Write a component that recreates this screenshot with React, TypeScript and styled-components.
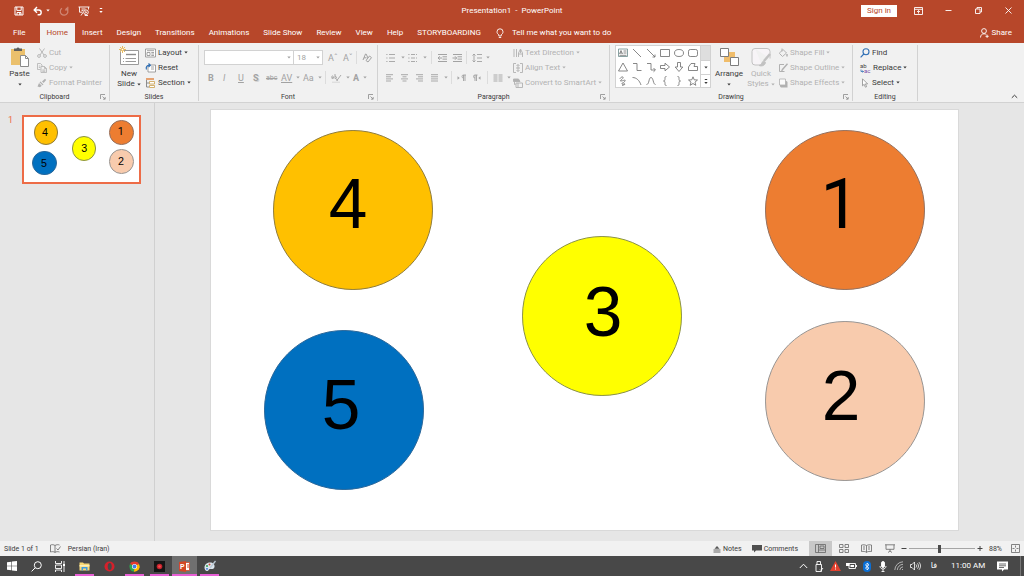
import React from "react";
import styled, { createGlobalStyle, css } from "styled-components";

const red = "#b7472a";
const ink = "#3b3b3b";
const faded = "#b1b1b1";
const line = "#d2d2d2";
const ui = '"Roboto", "Liberation Sans", sans-serif';

const GlobalStyle = createGlobalStyle`
  * { box-sizing: border-box; }
  body { margin: 0; background: #e6e6e6; font-family: ${ui}; }
  button, select, input { font: inherit; color: inherit; }
  svg { display: block; flex: none; overflow: visible; }
`;

const Page = styled.div`
  min-height: 100vh;
  display: flex;
  flex-direction: column;
  font-size: 8px;
  line-height: 10px;
  color: ${ink};
  white-space: nowrap;
`;

const bare = css`
  border: 0;
  padding: 0;
  margin: 0;
  background: none;
  display: flex;
  align-items: center;
  cursor: default;
`;

/* ---------- title bar and tabs ---------- */

const TitleBar = styled.header`
  height: 23px;
  display: grid;
  grid-template-columns: 1fr auto 1fr;
  align-items: center;
  padding-bottom: 2px;
  background: ${red};
  color: #fff;
`;
const QuickAccess = styled.div`
  display: flex;
  align-items: center;
  gap: 9px;
  padding-left: 14px;
`;
const BarButton = styled.button<{ $dim?: boolean }>`
  ${bare}
  gap: 3px;
  opacity: ${(p) => (p.$dim ? 0.35 : 1)};
`;
const DocTitle = styled.h1`
  margin: 0;
  font-size: 8px;
  font-weight: 400;
`;
const WindowTools = styled.div`
  display: flex;
  align-items: center;
  justify-content: flex-end;
  padding-right: 1px;
`;
const SignIn = styled.button`
  ${bare}
  height: 12px;
  padding: 0 6px;
  margin-right: 6px;
  background: #fff;
  color: ${red};
`;
const WindowButton = styled.button`
  ${bare}
  width: 30px;
  height: 20px;
  justify-content: center;
`;

const TabBar = styled.nav`
  height: 20px;
  display: flex;
  align-items: stretch;
  background: ${red};
  color: #fff;
`;
const Tab = styled.button<{ $active?: boolean; $file?: boolean }>`
  ${bare}
  padding: 0 ${(p) => (p.$file ? "14px 0 13px" : "7px")};
  background: ${(p) => (p.$active ? "#f1f1f1" : "none")};
  color: ${(p) => (p.$active ? red : "#fff")};
`;
const TellMe = styled.label`
  display: flex;
  align-items: center;
  gap: 8px;
  margin-left: 8px;
`;
const TellMeInput = styled.input`
  width: 120px;
  padding: 0;
  border: 0;
  outline: 0;
  background: none;
  &::placeholder { color: #fff; opacity: 1; }
`;
const Share = styled.button`
  ${bare}
  gap: 3px;
  margin-left: auto;
  padding-right: 12px;
`;

/* ---------- ribbon ---------- */

const Ribbon = styled.section`
  height: 60px;
  display: flex;
  background: #f1f1f1;
  border-bottom: 1px solid ${line};
  padding-top: 2px;
`;
const Group = styled.section<{ $w: number }>`
  width: ${(p) => p.$w}px;
  display: flex;
  flex-direction: column;
  border-right: 1px solid ${line};
  margin-bottom: 1px;
`;
const GroupBody = styled.div<{ $gap?: number; $pad?: number }>`
  height: 45px;
  flex: none;
  display: flex;
  gap: ${(p) => p.$gap ?? 4}px;
  padding-left: ${(p) => p.$pad ?? 5}px;
`;
const GroupFooter = styled.div`
  flex: 1;
  display: grid;
  grid-template-columns: 12px 1fr 12px;
  align-items: end;
`;
const GroupName = styled.h2`
  grid-column: 2;
  margin: 0;
  font-size: 7px;
  line-height: 8px;
  font-weight: 400;
  text-align: center;
`;
const Launcher = styled.button`
  ${bare}
  height: 8px;
  justify-content: center;
`;
const BigButton = styled.button<{ $off?: boolean; $w: number }>`
  ${bare}
  width: ${(p) => p.$w}px;
  flex-direction: column;
  color: ${(p) => (p.$off ? faded : ink)};
`;
const BigIcon = styled.span`
  height: 24px;
  display: flex;
  align-items: center;
`;
const BigLabel = styled.span`
  display: flex;
  align-items: center;
  gap: 2px;
  min-height: 10px;
`;
const Stack = styled.div`
  display: flex;
  flex-direction: column;
`;
const SmallButton = styled.button<{ $off?: boolean }>`
  ${bare}
  height: 15px;
  gap: 2px;
  color: ${(p) => (p.$off ? faded : ink)};
`;
const ToolRows = styled.div`
  display: flex;
  flex-direction: column;
  gap: 5px;
  padding-top: 5px;
`;
const ToolRow = styled.div<{ $indent?: boolean }>`
  display: flex;
  align-items: center;
  height: 15px;
  padding-left: ${(p) => (p.$indent ? 4 : 0)}px;
`;
const Tool = styled.button<{ $w?: number }>`
  ${bare}
  width: ${(p) => p.$w ?? 15}px;
  height: 15px;
  gap: 4px;
  color: #a2a2a2;
`;
const Rule = styled.span`
  width: 1px;
  height: 13px;
  margin: 0 5px 0 0;
  background: #dcdcdc;
`;
const Combo = styled.select<{ $w: number }>`
  width: ${(p) => p.$w}px;
  height: 15px;
  padding: 0 3px;
  border: 1px solid ${line};
  border-radius: 0;
  background: #fff;
  color: #a2a2a2;
  opacity: 1;
  appearance: none;
`;
const ComboBox = styled.span<{ $last?: boolean }>`
  display: grid;
  align-items: center;
  color: #a2a2a2;
  margin-right: ${(p) => (p.$last ? 5 : -1)}px;
  & > * { grid-area: 1 / 1; }
  & > svg { justify-self: end; margin-right: 3px; pointer-events: none; }
`;
const Gallery = styled.div`
  display: grid;
  grid-template-columns: 84px 10px;
  height: 43px;
  border: 1px solid ${line};
  background: #fff;
`;
const GalleryGrid = styled.div`
  display: grid;
  grid-template-columns: repeat(6, 14px);
  grid-auto-rows: 14px;
`;
const GalleryCell = styled.button<{ $filled?: boolean }>`
  ${bare}
  justify-content: center;
  background: ${(p) => (p.$filled ? "#dedede" : "none")};
`;
const GalleryScroll = styled.div`
  display: grid;
  grid-template-rows: repeat(3, 1fr);
  border-left: 1px solid ${line};
  & > * + * { border-top: 1px solid ${line}; }
`;
const RibbonEnd = styled.div`
  flex: 1;
  display: flex;
  align-items: flex-end;
  justify-content: flex-end;
  padding: 0 6px 3px 0;
`;

/* ---------- workspace ---------- */

const Workspace = styled.main`
  flex: 1;
  display: flex;
`;
const ThumbPane = styled.aside`
  width: 155px;
  flex: none;
  display: flex;
  align-items: flex-start;
  gap: 8px;
  padding: 12px 13px 0 8px;
  border-right: 1px solid #d0d0d0;
`;
const ThumbNumber = styled.span`
  width: 6px;
  font-size: 9px;
  color: #ed6c47;
`;
const ThumbFrame = styled.div`
  flex: 1;
  border: 2px solid #ed6c47;
`;
const Stage = styled.div`
  flex: 1;
  padding: 7px 66px 9px 56px;
`;
const SlidePaper = styled.div<{ $edge?: boolean }>`
  position: relative;
  container-type: inline-size;
  aspect-ratio: 16 / 9;
  background: #fff;
  outline: ${(p) => (p.$edge ? "1px solid #d9d9d9" : "none")};
`;
const Disc = styled.div<{ $x: number; $y: number; $fill: string; $stroke: string }>`
  position: absolute;
  left: ${(p) => (p.$x / 747) * 100}%;
  top: ${(p) => (p.$y / 420) * 100}%;
  width: 21.4%;
  aspect-ratio: 1;
  border: 1px solid ${(p) => p.$stroke};
  border-radius: 50%;
  background: ${(p) => p.$fill};
`;
const Digit = styled.span<{ $x: number; $y: number; $face?: string }>`
  position: absolute;
  left: ${(p) => (p.$x / 747) * 100}%;
  top: ${(p) => (p.$y / 420) * 100}%;
  transform: translate(-50%, -50%);
  font-family: ${(p) => p.$face ?? '"Liberation Sans"'}, Arial, sans-serif;
  font-size: 9.3cqw;
  line-height: 1;
  color: #000;
`;

/* ---------- status bar and taskbar ---------- */

const StatusBar = styled.footer`
  height: 15px;
  display: flex;
  align-items: center;
  background: #f1f1f1;
  font-size: 7px;
  padding: 0 4px;
`;
const StatusText = styled.span`
  margin-right: 11px;
`;
const StatusItem = styled.button<{ $l?: number; $gap?: number }>`
  ${bare}
  gap: ${(p) => p.$gap ?? 2}px;
  margin-left: ${(p) => p.$l ?? 0}px;
`;
const Views = styled.div`
  display: flex;
  margin-left: 11px;
`;
const ViewButton = styled.button<{ $on?: boolean }>`
  ${bare}
  width: 23px;
  height: 15px;
  justify-content: center;
  background: ${(p) => (p.$on ? "#c8c8c8" : "none")};
`;
const Spread = styled.div`
  flex: 1;
`;
const Zoom = styled.input`
  appearance: none;
  width: 66px;
  height: 9px;
  margin: 0 2px;
  background: linear-gradient(#a5a5a5, #a5a5a5) center / 100% 1px no-repeat;
  &::-webkit-slider-thumb {
    appearance: none;
    width: 3px;
    height: 8px;
    background: #4a4a4a;
  }
`;
const Percent = styled.span`
  width: 14px;
  margin: 0 8px 0 6px;
`;

const Taskbar = styled.footer`
  height: 20px;
  display: flex;
  background: #484848;
  color: #fff;
`;
const TaskButton = styled.button<{ $w: number; $on?: boolean }>`
  ${bare}
  width: ${(p) => p.$w}px;
  justify-content: center;
  background: ${(p) => (p.$on ? "#707070" : "none")};
`;
const AppButton = styled(TaskButton)<{ $open?: boolean }>`
  position: relative;
  &::after {
    content: "";
    position: absolute;
    left: ${(p) => (p.$on ? 0 : 3)}px;
    right: ${(p) => (p.$on ? 0 : 3)}px;
    bottom: 0;
    height: 2px;
    background: ${(p) => (p.$open ? "#e85fd6" : "none")};
  }
`;
const Clock = styled.time`
  width: 35px;
  margin: 0 10px 0 6px;
  align-self: center;
`;
const Language = styled.button`
  ${bare}
  width: 22px;
  justify-content: center;
  font-family: "DejaVu Sans", sans-serif;
`;
const PeekEdge = styled.span`
  width: 4px;
  margin-left: 12px;
  border-left: 1px solid #777;
`;

/* ---------- drawings ---------- */

type IconProps = { w?: number; h?: number; s?: string; f?: string; sw?: number; children: React.ReactNode };
const Icon = ({ w = 10, h = 10, s = "currentColor", f = "none", sw = 1, children }: IconProps) => (
  <svg width={w} height={h} viewBox={`0 0 ${w} ${h}`} fill={f} stroke={s} strokeWidth={sw} aria-hidden="true">
    {children}
  </svg>
);
const Caret = () => (
  <Icon w={4} h={3} s="none" f="currentColor"><path d="M.3.5h3.4L2 2.500z" /></Icon>
);
const LaunchIcon = () => (
  <Icon w={6} h={6} s="#8a8a8a" sw={0.8}><path d="M.5 5V.5H5M2.5 2.500 5 5M5.200 3v2.200H3" /></Icon>
);

const SaveIcon = () => (
  <Icon><path d="M1 1h8v8H1zM2.800 1v3.400h4.400V1M3 9V6.500h4V9" /><path d="M5.200 7h1.200v2H5.200z" fill="currentColor" stroke="none" /></Icon>
);
const UndoIcon = () => (
  <Icon sw={1.4}><path d="M1.200 4h4.600a2.400 2.400 0 0 1 0 4.800H4.600M4 1 1.200 4 4 6.800" /></Icon>
);
const RedoIcon = () => (
  <Icon sw={1.2}><path d="M6.800 2A3.800 3.800 0 1 1 3 2.200M8.800.800v3H6" /></Icon>
);
const PresentIcon = () => (
  <Icon w={12} sw={0.9}><path d="M.500 1h11M1.500 1v5.200h3M10.500 1v2.500M3.500 3h4M3.500 4.600h2M5 6.500 3 9.500" /><circle cx="8" cy="6.200" r="2.300" /><path d="M7.300 5v2.400L9.300 6.200z" fill="currentColor" stroke="none" /><path d="M7 8.500v1h3" /></Icon>
);
const MoreIcon = () => (
  <Icon w={4} h={6} s="none" f="currentColor"><path d="M.800 0h2.400v1H.800zM.300 3h3.400L2 5z" /></Icon>
);
const RibbonOptionsIcon = () => (
  <Icon w={9} h={8} sw={0.9}><path d="M.500.500h8v7h-8zM.500 2.300h8M4.500 6.600V3.600M3 5l1.500-1.500L6 5" /></Icon>
);
const MinIcon = () => <Icon w={7} h={7} sw={0.9}><path d="M.500 3.500h6" /></Icon>;
const RestoreIcon = () => <Icon w={7} h={7} sw={0.9}><path d="M.500 2h4.500v4.500H.500zM2 2V.500h4.500V5H5" /></Icon>;
const CloseIcon = () => <Icon w={7} h={7} sw={0.9}><path d="M.500.500l6 6M6.500.500l-6 6" /></Icon>;
const BulbIcon = () => (
  <Icon w={8} h={11} sw={0.9}><path d="M2.800 8V6.800C1.500 5.900 1 5 1 3.800a3 3 0 0 1 6 0C7 5 6.500 5.900 5.200 6.800V8zM2.800 9.500h2.400" /></Icon>
);
const PersonIcon = () => (
  <Icon w={9} sw={0.9}><circle cx="4" cy="3" r="2.400" /><path d="M.500 9.500C.600 7 2 5.800 4 5.800c1 0 1.700.200 2.300.700M5.500 8.300h3.200M7.100 6.700v3.200" /></Icon>
);
const PasteIcon = () => (
  <Icon w={20} h={22} s="none">
    <path d="M1 3h14v16H1z" fill="#ebc06c" />
    <path d="M4 5V2.500h2.500a1.600 1.600 0 0 1 3 0H12V5z" fill="#5d5d5d" />
    <path d="M10.500 9.500h5l3 3v8h-8z" fill="#fff" stroke="#8b8b8b" />
    <path d="M15.500 9.500v3h3" stroke="#8b8b8b" />
  </Icon>
);
const CutIcon = () => (
  <Icon sw={0.9}><path d="M2.500.500 7 7M7.500.500 3 7" /><circle cx="2" cy="8" r="1.400" /><circle cx="8" cy="8" r="1.400" /></Icon>
);
const CopyIcon = () => (
  <Icon sw={0.8}><path d="M3.500 6.500h-3v-6h3l1.500 1.500v1M4 3.500h3.500l2 2v4H4zM7.500 3.500v2h2M5.300 7h3M5.300 8.300h3M1.800 3h1.500M1.800 4.500h1.500" /></Icon>
);
const PainterIcon = () => (
  <Icon s="none" f="currentColor"><path d="M5 3.500 8 .800l1.200 1.200-2.600 3zM3.500 3.500l3 3-1 .800-3-3zM2 5l2.800 2.800L3 9.300.500 8.500z" /></Icon>
);
const NewSlideIcon = () => (
  <Icon w={20} h={20} s="#9a9a9a">
    <path d="M1.500 3.500h18v14h-18z" fill="#fff" />
    <path d="M7 7.500h10" stroke="#8b8b8b" strokeWidth="1.400" />
    <path d="M4 11.500h1M6.500 11.500H17M4 14.500h1M6.500 14.500H17" />
    <path d="M3.500-1v7M0 2.500h7M1 0l5 5M6 0 1 5" stroke="#e8b95c" />
    <circle cx="3.500" cy="2.500" r="1.200" fill="#fff" stroke="#e8b95c" />
  </Icon>
);
const LayoutIcon = () => (
  <Icon w={11} s="#8c8c8c" sw={0.8}><path d="M.500 1h10v8H.500z" fill="#fff" /><path d="M2 2.700h7M2 4.500h3v3H2zM6.300 4.500H9M6.300 6H9M6.300 7.500H9" /></Icon>
);
const ResetIcon = () => (
  <Icon w={11} s="#8c8c8c" sw={0.8}><path d="M3 2h7.500v7H3z" fill="#fff" /><path d="M6 4h3M6 6h3" /><path d="M1.500 6.500C.500 4 2 2 5 2.300M3.500.500 5.300 2.300 3.500 4" stroke="#2f6fb5" strokeWidth="1.200" /></Icon>
);
const SectionIcon = () => (
  <Icon w={11}><path d="M1 1h8" stroke="#e0803c" strokeWidth="1.400" /><path d="M1.500 2v7M1.500 5H4M1.500 9H4" stroke="#8c8c8c" /><path d="M4.500 3.500h5v2.500h-5zM4.500 7.500h5v2h-5z" fill="#fff" stroke="#caa04d" strokeWidth=".8" /></Icon>
);
const EraserIcon = () => (
  <Icon><path d="M1 7 3.500 1h.600L6 5M2 4.800h2.500" /><path d="M4 7.500 7.500 3 9.500 4.600 6 9z" fill="#f1f1f1" /></Icon>
);
const HighlightIcon = () => (
  <Icon w={11} sw={0.9}><path d="M.500 4.500c0-2 2-2 2 0v1M2.500 4.500h-1c-1 0-1 1.500.500 1M4 1v4.500c2 .500 2-2.500 0-2.200M5.500 8l4.500-6M5 5.800l2 1.800" /><path d="M1 9.300h8" stroke="#dedede" strokeWidth="1.400" /></Icon>
);
const BulletIcon = ({ numbered }: { numbered?: boolean }) => (
  <Icon w={11} sw={0.9}><path d="M3 1.500h6M3 5h6M3 8.500h6" strokeDasharray={numbered ? "4 1" : "none"} /><path d="M.300 1.500h1.200M.300 5h1.200M.300 8.500h1.200" /></Icon>
);
const IndentIcon = ({ out }: { out?: boolean }) => (
  <Icon w={11}><path d="M1 1.500h9M5.500 3.800H10M5.500 6.100H10M1 8.500h9" /><path d={out ? "M5 5H1M2.800 3.300 1 5l1.800 1.700" : "M.500 5h4M3 3.300 4.700 5 3 6.700"} /></Icon>
);
const SpacingIcon = () => (
  <Icon w={10} sw={0.9}><path d="M5 1.500h5M5 5h5M5 8.500h5M2 1v8M.500 2.500 2 1l1.500 1.500M.500 7.500 2 9l1.500-1.500" /></Icon>
);
const AlignIcon = ({ a }: { a: "l" | "c" | "r" | "j" }) => {
  const short = { l: "M0 3.800h5M0 8h5", c: "M1.500 3.800h4M1.500 8h4", r: "M2 3.800h5M2 8h5", j: "M0 3.800h7M0 8h7" }[a];
  return <Icon w={9} sw={0.9}><path d={`M0 1.700h7M0 5.900h7${short}`} /></Icon>;
};
const PilcrowIcon = ({ left }: { left?: boolean }) => (
  <Icon w={9} sw={0.9}>
    <path d={left ? "M4.500 2v6M3 2v6M5.500 2H3a1.500 1.500 0 0 0 0 3" : "M8 2v6M6.500 2v6M9 2H6.500a1.500 1.500 0 0 0 0 3"} />
    <path d={left ? "M8.500 3.300v3.400L6.300 5z" : "M.500 3.300v3.400L2.700 5z"} fill="currentColor" stroke="none" />
  </Icon>
);
const ColumnsIcon = () => (
  <Icon w={10} sw={0.9}><path d="M.500 2h4M.500 4h4M.500 6h4M.500 8h4M5.500 2h4M5.500 4h4M5.500 6h4M5.500 8h4" /></Icon>
);
const TextDirIcon = () => (
  <Icon sw={0.9}><path d="M1 1v8M3.500 1v8M5.500 9V5L7.500 1l2 4v4M5.500 6h4M7.500 2v3" /></Icon>
);
const AlignTextIcon = () => (
  <Icon sw={0.9}><path d="M3 .500H.500v9H3M7 .500h2.500v9H7M5 1.500v7M3.500 3 5 1.500 6.500 3M3.500 7 5 8.500 6.500 7M3 5h4" /></Icon>
);
const SmartArtIcon = () => (
  <Icon w={10} sw={0.9}><path d="M.500 1h5L7 3.500H.500z" fill="currentColor" /><path d="M1.500 3.500v3h1M3 5h6.500v4.500H3zM5 5v4.500" /></Icon>
);
const ArrangeIcon = () => (
  <Icon w={20} h={20} s="#7d7d7d">
    <path d="M5 5h11v10H5z" fill="#f0bd6b" stroke="none" />
    <path d="M1.500 1.500h8v8h-8zM11.500 10.500h8v8h-8z" fill="#fff" />
  </Icon>
);
const QuickStylesIcon = () => (
  <Icon w={20} h={20} s="#c2c2c2">
    <path d="M4 1.500h12a3 3 0 0 1 3 3v7M11 18H4a3 3 0 0 1-3-3V4.500a3 3 0 0 1 3-3" fill="#f7f4f7" />
    <path d="M19 7l-6 7" strokeWidth="2.500" /><path d="M8 18.500c3 0 2-3 4.500-4.500l2 1.500c-.500 3-3.500 4-6.500 3z" fill="#c2c2c2" />
  </Icon>
);
const FillIcon = () => (
  <Icon><path d="M2 4.500 5 1.500l3.500 3.500-4 3.500L1.500 5.500zM4 .500v3" /><path d="M9 6v2.500" strokeWidth="1.500" /></Icon>
);
const OutlineIcon = () => (
  <Icon><path d="M6 1.500H1.500v7h5" /><path d="M9.500.800 4.500 6.500l-.8 1.500" strokeWidth="1.400" /></Icon>
);
const EffectsIcon = () => (
  <Icon s="none"><path d="M2 3h6.500l1 1v5.500H3L2 8.500z" fill="currentColor" /><path d="M1.500 1h6v6h-6z" fill="#fafafa" stroke="currentColor" strokeWidth=".8" /></Icon>
);
const FindIcon = () => (
  <Icon s="#2f6fb5" sw={1.1}><circle cx="6" cy="3.800" r="3" /><path d="M3.800 6 .600 9.400" /></Icon>
);
const ReplaceIcon = () => (
  <svg width="11" height="12" viewBox="0 0 11 12" fontFamily={ui} fontSize="6" aria-hidden="true">
    <text x="0" y="6" fill="#444">ab</text>
    <text x="4" y="11" fill="#7a4fa8">ac</text>
    <path d="M1 7.500v2h2.500M2.500 8.500l1 1-1 1" fill="none" stroke="#2f6fb5" strokeWidth=".8" />
  </svg>
);
const SelectIcon = () => (
  <Icon s="#8b8b8b" f="#fff" sw={0.8}><path d="M2.500.800v7l1.700-1.500 1.200 2.900 1.200-.500-1.200-2.800h2.200z" /></Icon>
);
const UpIcon = () => <Icon w={7} h={5}><path d="M.800 3.800 3.500 1.200l2.700 2.600" /></Icon>;

const shapeIcons: React.ReactNode[] = [
  <><path d="M.500 1h9v7.500h-9z" stroke="#6b8a8a" /><path d="M1.500 6 3 2.500 4.500 6M2 5h2M5.500 3h3M5.500 5h3M1.500 7.300h7" /></>,
  <path d="M1 1l8 8" />,
  <path d="M1 1l8 8M9 6.500V9H6.500" />,
  <path d="M.500 1.500h9v7h-9z" />,
  <ellipse cx="5" cy="5" rx="4.500" ry="3.500" />,
  <rect x=".5" y="1.500" width="9" height="7" rx="1.800" />,
  <path d="M5 1l4.500 8h-9z" />,
  <path d="M1 1.500h4v7h4.500" />,
  <path d="M1 1.500h4v6.500h4M7.500 6 9.500 8 7.500 9.800" />,
  <path d="M.500 3.500H5V1.200L9.500 5 5 8.800V6.500H.500z" />,
  <path d="M3.500.500h3V5h2.300L5 9.500 1.200 5h2.300z" />,
  <path d="M3 1.500h4L6 4.500h3.500v4h-9V5z" />,
  <path d="M2 3c0-2 4-3 3-1S1 5 3 5s5-2 4 0-4 2-3 3 3-1 3 0-2 1-3 1.500" />,
  <path d="M.500 1.500c4 0 7 3 8.500 7.500" />,
  <path d="M.500 8.500c3 0 2-7 4.500-7s2 7 4.500 7" />,
  <path d="M6.500.500C5 .500 5 1 5 2.500S4.800 5 3.500 5C4.800 5 5 6 5 7.500s0 2 1.500 2" />,
  <path d="M3.500.500C5 .500 5 1 5 2.500S5.200 5 6.500 5C5.200 5 5 6 5 7.500s0 2-1.500 2" />,
  <path d="M5 .800 6.200 3.800l3.300.200L7 6.100l.800 3.200L5 7.500 2.200 9.300 3 6.100.500 4l3.300-.200z" />,
];

/* ---------- slide ---------- */

const discs = [
  { n: "4", x: 62, y: 20, tx: 137, ty: 95, fill: "#ffc000", stroke: "#8f7c3c" },
  { n: "5", x: 53, y: 220, tx: 130, ty: 296, fill: "#0070c0", stroke: "#2a679a" },
  { n: "3", x: 311, y: 126, tx: 392, ty: 203, fill: "#ffff00", stroke: "#8a9148" },
  { n: "1", x: 554, y: 20, tx: 629, ty: 95, fill: "#ed7d31", stroke: "#94705e", face: '"Roboto"' },
  { n: "2", x: 554, y: 211, tx: 630, ty: 287, fill: "#f8cbad", stroke: "#989593" },
];
const Slide = ({ edge }: { edge?: boolean }) => (
  <SlidePaper $edge={edge}>
    {discs.map((d) => (
      <React.Fragment key={d.n}>
        <Disc $x={d.x} $y={d.y} $fill={d.fill} $stroke={d.stroke} />
        <Digit $x={d.tx} $y={d.ty} $face={d.face}>{d.n}</Digit>
      </React.Fragment>
    ))}
  </SlidePaper>
);

/* ---------- ribbon pieces ---------- */

const RibbonGroup = ({ name, w, launch = true, pad, gap, children }: {
  name: string; w: number; launch?: boolean; pad?: number; gap?: number; children: React.ReactNode;
}) => (
  <Group $w={w} aria-label={name}>
    <GroupBody $pad={pad} $gap={gap}>{children}</GroupBody>
    <GroupFooter>
      <GroupName>{name}</GroupName>
      {launch && <Launcher aria-label={`${name} settings`}><LaunchIcon /></Launcher>}
    </GroupFooter>
  </Group>
);
const Small = ({ icon, label, menu, off }: { icon: React.ReactNode; label: string; menu?: boolean; off?: boolean }) => (
  <SmallButton $off={off}>{icon}{label}{menu && <Caret />}</SmallButton>
);

const Glyph = styled.span<{ $kind?: "b" | "i" | "u" | "s" | "x"; $small?: boolean }>`
  font-size: ${(p) => (p.$small ? 7 : 9)}px;
  font-weight: ${(p) => (p.$kind === "b" || p.$kind === "s" ? 700 : 400)};
  font-style: ${(p) => (p.$kind === "i" ? "italic" : "normal")};
  text-decoration: ${(p) => (p.$kind === "u" ? "underline" : p.$kind === "x" ? "line-through" : "none")};
  text-shadow: ${(p) => (p.$kind === "s" ? "1px 1px 0 #d5d5d5" : "none")};
`;

const tabs = ["Insert", "Design", "Transitions", "Animations", "Slide Show", "Review", "View", "Help", "STORYBOARDING"];

export default function App() {
  return (
    <Page>
      <GlobalStyle />
      <TitleBar>
        <QuickAccess>
          <BarButton aria-label="Save"><SaveIcon /></BarButton>
          <BarButton aria-label="Undo"><UndoIcon /><Caret /></BarButton>
          <BarButton aria-label="Redo" $dim><RedoIcon /></BarButton>
          <BarButton aria-label="Start from beginning"><PresentIcon /></BarButton>
          <BarButton aria-label="Customize toolbar"><MoreIcon /></BarButton>
        </QuickAccess>
        <DocTitle>Presentation1 &nbsp;-&nbsp; PowerPoint</DocTitle>
        <WindowTools>
          <SignIn>Sign in</SignIn>
          <WindowButton aria-label="Ribbon options"><RibbonOptionsIcon /></WindowButton>
          <WindowButton aria-label="Minimize"><MinIcon /></WindowButton>
          <WindowButton aria-label="Restore"><RestoreIcon /></WindowButton>
          <WindowButton aria-label="Close"><CloseIcon /></WindowButton>
        </WindowTools>
      </TitleBar>

      <TabBar>
        <Tab $file>File</Tab>
        <Tab $active>Home</Tab>
        {tabs.map((t) => <Tab key={t}>{t}</Tab>)}
        <TellMe>
          <BulbIcon />
          <TellMeInput aria-label="Tell me what you want to do" placeholder="Tell me what you want to do" />
        </TellMe>
        <Share><PersonIcon />Share</Share>
      </TabBar>

      <Ribbon>
        <RibbonGroup name="Clipboard" w={110} pad={7} gap={5}>
          <BigButton $w={25}><BigIcon><PasteIcon /></BigIcon><BigLabel>Paste</BigLabel><BigLabel><Caret /></BigLabel></BigButton>
          <Stack>
            <Small off icon={<CutIcon />} label="Cut" />
            <Small off icon={<CopyIcon />} label="Copy" menu />
            <Small off icon={<PainterIcon />} label="Format Painter" />
          </Stack>
        </RibbonGroup>

        <RibbonGroup name="Slides" w={89} launch={false} pad={6} gap={3}>
          <BigButton $w={26}><BigIcon><NewSlideIcon /></BigIcon><BigLabel>New</BigLabel><BigLabel>Slide<Caret /></BigLabel></BigButton>
          <Stack>
            <Small icon={<LayoutIcon />} label="Layout" menu />
            <Small icon={<ResetIcon />} label="Reset" />
            <Small icon={<SectionIcon />} label="Section" menu />
          </Stack>
        </RibbonGroup>

        <RibbonGroup name="Font" w={179}>
          <ToolRows>
            <ToolRow>
              <ComboBox><Combo $w={90} aria-label="Font" disabled><option></option></Combo><Caret /></ComboBox>
              <ComboBox $last><Combo $w={30} aria-label="Font size" disabled><option>18</option></Combo><Caret /></ComboBox>
              <Tool aria-label="Increase font size"><Glyph>A&#710;</Glyph></Tool>
              <Tool $w={13} aria-label="Decrease font size"><Glyph>A&#711;</Glyph></Tool>
              <Rule />
              <Tool aria-label="Clear formatting"><EraserIcon /></Tool>
            </ToolRow>
            <ToolRow $indent>
              <Tool><Glyph $kind="b">B</Glyph></Tool>
              <Tool><Glyph $kind="i">I</Glyph></Tool>
              <Tool><Glyph $kind="u">U</Glyph></Tool>
              <Tool $w={13}><Glyph $kind="s">S</Glyph></Tool>
              <Tool><Glyph $small $kind="x">abc</Glyph></Tool>
              <Tool $w={22}><Glyph $kind="u">AV</Glyph><Caret /></Tool>
              <Tool $w={22}><Glyph>Aa</Glyph><Caret /></Tool>
              <Rule />
              <Tool $w={22} aria-label="Highlight"><HighlightIcon /><Caret /></Tool>
              <Tool $w={20}><Glyph $kind="b">A</Glyph><Caret /></Tool>
            </ToolRow>
          </ToolRows>
        </RibbonGroup>

        <RibbonGroup name="Paragraph" w={232} pad={8} gap={2}>
          <ToolRows>
            <ToolRow>
              <Tool $w={22} aria-label="Bullets"><BulletIcon /><Caret /></Tool>
              <Tool $w={23} aria-label="Numbering"><BulletIcon numbered /><Caret /></Tool>
              <Rule />
              <Tool aria-label="Decrease indent"><IndentIcon out /></Tool>
              <Tool $w={14} aria-label="Increase indent"><IndentIcon /></Tool>
              <Rule />
              <Tool $w={22} aria-label="Line spacing"><SpacingIcon /><Caret /></Tool>
            </ToolRow>
            <ToolRow>
              <Tool aria-label="Align left"><AlignIcon a="l" /></Tool>
              <Tool aria-label="Center"><AlignIcon a="c" /></Tool>
              <Tool aria-label="Align right"><AlignIcon a="r" /></Tool>
              <Tool $w={20} aria-label="Justify"><AlignIcon a="j" /><Caret /></Tool>
              <Rule />
              <Tool aria-label="Left to right"><PilcrowIcon /></Tool>
              <Tool aria-label="Right to left"><PilcrowIcon left /></Tool>
              <Rule />
              <Tool $w={18} aria-label="Columns"><ColumnsIcon /><Caret /></Tool>
            </ToolRow>
          </ToolRows>
          <Stack>
            <Small off icon={<TextDirIcon />} label="Text Direction" menu />
            <Small off icon={<AlignTextIcon />} label="Align Text" menu />
            <Small off icon={<SmartArtIcon />} label="Convert to SmartArt" menu />
          </Stack>
        </RibbonGroup>

        <RibbonGroup name="Drawing" w={243} pad={5} gap={3}>
          <Gallery>
            <GalleryGrid>
              {shapeIcons.map((shape, i) => (
                <GalleryCell key={i} aria-label={`Shape ${i + 1}`}><Icon s="#6a6a6a" sw={0.8}>{shape}</Icon></GalleryCell>
              ))}
            </GalleryGrid>
            <GalleryScroll>
              <GalleryCell $filled aria-label="Scroll up" />
              <GalleryCell aria-label="Scroll down"><Caret /></GalleryCell>
              <GalleryCell aria-label="More shapes"><MoreIcon /></GalleryCell>
            </GalleryScroll>
          </Gallery>
          <BigButton $w={30}><BigIcon><ArrangeIcon /></BigIcon><BigLabel>Arrange</BigLabel><BigLabel><Caret /></BigLabel></BigButton>
          <BigButton $w={28} $off><BigIcon><QuickStylesIcon /></BigIcon><BigLabel>Quick</BigLabel><BigLabel>Styles<Caret /></BigLabel></BigButton>
          <Stack>
            <Small off icon={<FillIcon />} label="Shape Fill" menu />
            <Small off icon={<OutlineIcon />} label="Shape Outline" menu />
            <Small off icon={<EffectsIcon />} label="Shape Effects" menu />
          </Stack>
        </RibbonGroup>

        <RibbonGroup name="Editing" w={65} launch={false} pad={7}>
          <Stack>
            <Small icon={<FindIcon />} label="Find" />
            <Small icon={<ReplaceIcon />} label="Replace" menu />
            <Small icon={<SelectIcon />} label="Select" menu />
          </Stack>
        </RibbonGroup>
        <RibbonEnd><BarButton aria-label="Collapse ribbon"><UpIcon /></BarButton></RibbonEnd>
      </Ribbon>

      <Workspace>
        <ThumbPane>
          <ThumbNumber>1</ThumbNumber>
          <ThumbFrame><Slide /></ThumbFrame>
        </ThumbPane>
        <Stage><Slide edge /></Stage>
      </Workspace>

      <StatusBar>
        <StatusText>Slide 1 of 1</StatusText>
        <StatusItem aria-label="Spelling">
          <Icon w={11} h={9} s="#666" sw={0.8}><path d="M5 1.500C3.500.500 2 .500.500 1v7c1.500-.500 3-.500 4.500.300C6.500 7.500 8 7.500 9.500 8M5 1.500v7M5 1.500C6.500.500 8 .500 9.500 1M6.500 4.500 8 6l2.500-3.500" /></Icon>
        </StatusItem>
        <StatusItem $l={7}>Persian (Iran)</StatusItem>
        <Spread />
        <StatusItem>
          <Icon w={8} h={8} s="#555" sw={0.9}><path d="M.500 5h7M.500 7h7" /><path d="M1.500 3.800 4 1l2.500 2.800z" fill="#555" stroke="none" /></Icon>Notes
        </StatusItem>
        <StatusItem $l={10}>
          <Icon w={10} h={9} s="none" f="#4f4f4f"><path d="M0 1h10v5.500H4L2 8.500v-2H0z" /></Icon>Comments
        </StatusItem>
        <Views>
          <ViewButton $on aria-label="Normal"><Icon w={11} h={9} s="#666" sw={0.8}><path d="M.500.500h10v8H.500zM3.500.500v8M3.500 6h7M5 2h4v2.500H5z" /></Icon></ViewButton>
          <ViewButton aria-label="Slide sorter"><Icon w={10} h={9} s="#666" sw={0.8}><path d="M.500.500h3.500v3H.500zM6 .500h3.500v3H6zM.500 5.500h3.500v3H.500zM6 5.500h3.500v3H6z" /></Icon></ViewButton>
          <ViewButton aria-label="Reading view"><Icon w={11} h={9} s="#666" sw={0.8}><path d="M5.500 1.500C4 .700 2 .700.500 1v6.500c2-.300 3.500 0 5 .700 1.500-.700 3-1 5-.700V1c-1.500-.300-3.500-.300-5 .500zM5.500 1.500v7M2 3h2M2 5h2M7 3h2M7 5h2" /></Icon></ViewButton>
          <ViewButton aria-label="Slide show"><Icon w={10} h={9} s="#666" sw={0.8}><path d="M0 .800h10M1 .800v4.500h8V.800M5 5.300v2M3 8.500l2-1.500 2 1.500" /></Icon></ViewButton>
        </Views>
        <StatusItem aria-label="Zoom out"><Icon w={6} h={7} s="#444"><path d="M.500 3.500h5" /></Icon></StatusItem>
        <Zoom type="range" min={10} max={200} defaultValue={98} aria-label="Zoom" />
        <StatusItem aria-label="Zoom in"><Icon w={6} h={7} s="#444"><path d="M.500 3.500h5M3 1v5" /></Icon></StatusItem>
        <Percent>88%</Percent>
        <StatusItem aria-label="Fit slide to window"><Icon w={9} h={9} s="#666" sw={0.8}><path d="M.500.500h8v8h-8zM4.500 1.500v2M4.500 5.500v2M1.500 4.500h2M5.500 4.500h2" /></Icon></StatusItem>
      </StatusBar>

      <Taskbar>
        <TaskButton $w={24} aria-label="Start"><Icon s="none" f="#fff"><path d="M0 1.300 4.400.700v4H0zM5 .600 10 0v4.700H5zM0 5.300h4.400v4L0 8.700zM5 5.300h5V10l-5-.600z" /></Icon></TaskButton>
        <TaskButton $w={24} aria-label="Search"><Icon w={11} h={11}><circle cx="6.800" cy="4.200" r="3.500" /><path d="M4.300 6.700.600 10.400" /></Icon></TaskButton>
        <TaskButton $w={24} aria-label="Task view"><Icon w={11} h={11} sw={0.9}><path d="M.500 0v2.500h6V0M.500 4h6v3.500h-6zM.500 11V9h6v2M9 0v11" /><path d="M8 3h2v2H8z" fill="#fff" stroke="none" /></Icon></TaskButton>
        <AppButton $w={25} $open aria-label="File Explorer"><Icon w={11} h={9} s="none"><path d="M.500.500H4l1 1h5.500v7H.500z" fill="#f7d774" /><path d="M.500 3h10v1.500H.500z" fill="#fdf0b8" /><path d="M2.500 5h6v3.500h-1.500V6.500H4v2H2.500z" fill="#3f9be0" /></Icon></AppButton>
        <AppButton $w={25} aria-label="Opera"><Icon w={11} h={11} s="none"><circle cx="5.500" cy="5.500" r="5" fill="#d5202b" /><ellipse cx="5.700" cy="5.500" rx="2" ry="3.500" fill="#484848" /></Icon></AppButton>
        <AppButton $w={25} $open aria-label="Chrome"><Icon w={11} h={11} s="none"><path d="M5.500 5.500 1 3A5.200 5.200 0 0 1 10 3z" fill="#e33b2e" /><path d="M5.500 5.500 1 3a5.200 5.200 0 0 0 4 7.700z" fill="#2da94f" /><path d="M5.500 5.500 10 3a5.200 5.200 0 0 1-5 7.700z" fill="#fdbd00" /><circle cx="5.500" cy="5.500" r="2.500" fill="#fff" /><circle cx="5.500" cy="5.500" r="1.900" fill="#3f7fe8" /></Icon></AppButton>
        <AppButton $w={25} $open aria-label="Recorder"><Icon w={11} h={11} s="none"><path d="M0 0h11v11H0z" fill="#151515" /><circle cx="5.500" cy="5.500" r="2.800" fill="#c3242d" /><circle cx="5.500" cy="5.500" r="1.300" fill="#ff4a4f" /></Icon></AppButton>
        <AppButton $w={25} $open $on aria-label="PowerPoint"><svg width="11" height="11" viewBox="0 0 11 11" aria-hidden="true"><path d="M5 1.500h5.500v8H5z" fill="#fff" stroke="#d24726" strokeWidth=".8" /><path d="M0 1 7 0v11L0 10z" fill="#d24726" /><text x="1" y="8" fontSize="7" fontWeight="700" fill="#fff" fontFamily={ui}>P</text><path d="M8 4h2M8 6h2" stroke="#d24726" /></svg></AppButton>
        <AppButton $w={25} $open aria-label="Paint"><Icon w={12} h={11} s="none"><path d="M6 1.500C2.500 1.500.500 4 .500 6.500S2 10.500 3.500 10c1.500-.500 1-2 2.500-2s4 .500 4.500-2S9 1.500 6 1.500z" fill="#dbe6ee" /><circle cx="3" cy="5" r="1" fill="#2d9b50" /><circle cx="5.500" cy="3.500" r="1" fill="#d8452e" /><circle cx="3" cy="7.800" r=".9" fill="#2e6bd8" /><path d="M11.500 0 6 7" stroke="#b9c7d2" strokeWidth="1.300" /></Icon></AppButton>
        <Spread />
        <TaskButton $w={16} aria-label="Hidden icons"><Icon w={9} h={6}><path d="M.800 5 4.500 1.200 8.200 5" /></Icon></TaskButton>
        <TaskButton $w={16} aria-label="USB"><Icon w={8} h={11} sw={0.9}><path d="M2 3.500V.500h3.500v3M1 3.500h5.500v7H1zM5 8.500l1 1 2-2.500" /></Icon></TaskButton>
        <TaskButton $w={16} aria-label="Alert"><Icon w={11} h={10} s="none"><path d="M5.500 0 11 10H0z" fill="#e2412f" /><path d="M5 3.500h1v3H5zM5 7.500h1v1H5z" fill="#fff" /></Icon></TaskButton>
        <TaskButton $w={16} aria-label="Battery"><Icon w={11} h={8} sw={0.9}><path d="M3 1.500h6.500v5H3zM10.500 3v2" /><path d="M4.500 3h3.500v2H4.500zM0 1h3.500v3H0z" fill="#fff" stroke="none" /></Icon></TaskButton>
        <TaskButton $w={16} aria-label="Bluetooth"><Icon w={8} h={11} s="none"><rect width="8" height="11" rx="4" fill="#0a6fd6" /><path d="M2 3.500 6 7.200 4 9V2l2 1.800L2 7.500" stroke="#fff" strokeWidth=".8" /></Icon></TaskButton>
        <TaskButton $w={16} aria-label="Microphone"><Icon w={8} h={11} sw={0.9}><rect x="2.500" y=".5" width="3" height="6" rx="1.500" fill="#fff" /><path d="M1 5c0 4 6 4 6 0M4 8v2.500M2.500 10.500h3" /></Icon></TaskButton>
        <TaskButton $w={16} aria-label="Wi-Fi"><Icon s="#bdbdbd" sw={0.9}><path d="M.800 9A8.500 8.500 0 0 1 9 .800M3.300 9A6 6 0 0 1 9 3.300M5.800 9A3.500 3.500 0 0 1 9 5.800M8 9l1-1" /></Icon></TaskButton>
        <TaskButton $w={16} aria-label="Volume"><Icon w={11} h={10} sw={0.8}><path d="M.500 3.500H2L4.500 1v8L2 6.500H.500zM6 3.500c.700 1 .700 2 0 3M7.500 2.300c1.300 1.800 1.300 3.600 0 5.400M9 1.200c2 2.500 2 5 0 7.600" /></Icon></TaskButton>
        <Language lang="fa">فا</Language>
        <Clock>11:00 AM</Clock>
        <TaskButton $w={12} aria-label="Notifications"><Icon w={11} h={11} s="none"><path d="M0 .500h11v8H7L5 10.500v-2H0z" fill="#fff" /><path d="M2 3h7M2 4.800h7M2 6.500h5" stroke="#484848" strokeWidth=".8" /></Icon></TaskButton>
        <PeekEdge />
      </Taskbar>
    </Page>
  );
}
